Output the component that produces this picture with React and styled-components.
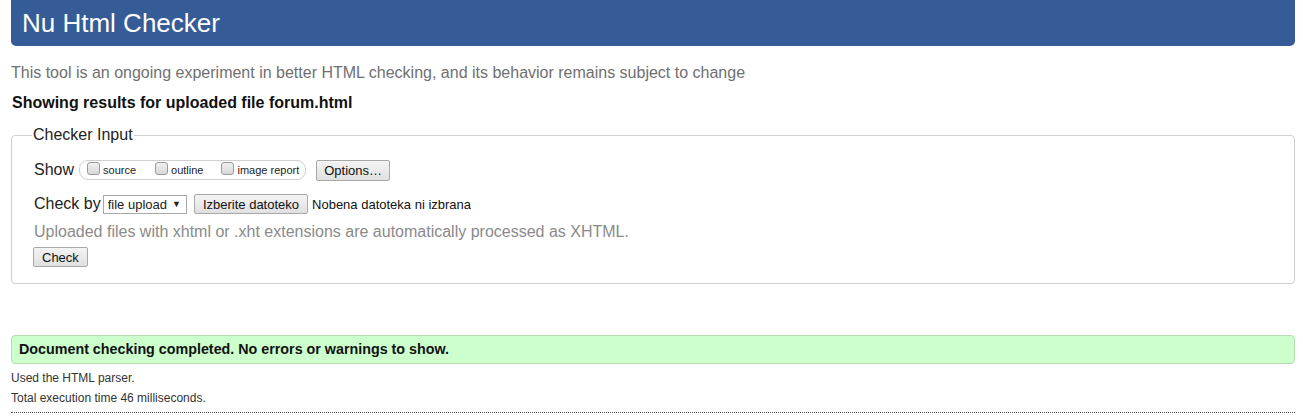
import React from 'react'
import styled, { createGlobalStyle } from 'styled-components'

const GlobalStyle = createGlobalStyle`
  html, body {
    margin: 0;
    padding: 0;
    background: #fff;
  }
  body {
    font-family: "Liberation Sans", Arial, sans-serif;
    color: #222;
  }
`

const Page = styled.div`
  padding: 0 8px 0 11px;
  width: 1284px;
`

const Header = styled.h1`
  margin: 0;
  height: 46px;
  background: #365c97;
  border-radius: 0 0 5px 5px;
  color: #fff;
  font-weight: normal;
  font-size: 26px;
  line-height: 46px;
  padding-left: 11px;
  box-sizing: border-box;
`

const Intro = styled.p`
  margin: 18px 0 0 0;
  font-size: 16px;
  line-height: 18px;
  color: #707070;
`

const ResultsFor = styled.h2`
  margin: 12px 0 0 1px;
  font-size: 16px;
  line-height: 18px;
  font-weight: bold;
  color: #111;
`

const Fieldset = styled.fieldset`
  margin: 14px 0 0 0;
  border: 1px solid #cfcfcf;
  border-radius: 4px;
  padding: 15px 22px 15px 22px;
`

const Legend = styled.legend`
  font-size: 16px;
  padding: 0 1px;
  margin-left: -2px;
  color: #222;
`

const Row = styled.div`
  display: flex;
  align-items: center;
  gap: ${p => p.gap || 4}px;
  margin-top: ${p => p.top || 0}px;
  height: 22px;
`

const RowLabel = styled.span`
  font-size: 16px;
  color: #222;
`

const Group = styled.span`
  display: inline-flex;
  align-items: center;
  height: 18px;
  border: 1px solid #cfcfcf;
  border-radius: 9px;
  padding: 0 6px 0 7px;
  margin-left: 1px;
`

const CheckItem = styled.label`
  display: inline-flex;
  align-items: center;
  font-size: 11px;
  color: #222;
  margin-right: ${p => p.gap || 0}px;
`

const Box = styled.input`
  appearance: none;
  width: 13px;
  height: 13px;
  margin: -3px 3px 0 0;
  border: 1px solid #9a9a9a;
  border-radius: 3px;
  background: linear-gradient(#f0f0f0, #d8d8d8);
`

const Button = styled.button`
  font-family: "Liberation Sans", Arial, sans-serif;
  font-size: 13px;
  color: #111;
  height: ${p => p.h || 21}px;
  padding: 0 ${p => p.px || 7}px;
  border: 1px solid #a8a8a8;
  border-radius: 2px;
  background: linear-gradient(#f4f4f4, #e0e0e0);
  margin-left: ${p => p.ml || 0}px;
`

const Select = styled.span`
  display: inline-flex;
  align-items: center;
  height: 19px;
  box-sizing: border-box;
  border: 1px solid #a8a8a8;
  background: #fff;
  font-size: 13px;
  padding: 0 5px 0 4px;
  gap: 5px;
  margin-left: -2px;
`

const Arrow = styled.span`
  font-size: 9px;
`

const FileName = styled.span`
  font-size: 13px;
  color: #111;
`

const Note = styled.p`
  margin: 8px 0 0 0;
  font-size: 16px;
  line-height: 18px;
  color: #8a8a8a;
`

const Success = styled.div`
  margin-top: 51px;
  height: 29px;
  box-sizing: border-box;
  background: #ccffcc;
  border: 1px solid #b5dcb5;
  border-radius: 4px;
  padding-left: 7px;
  font-size: 14.3px;
  font-weight: bold;
  line-height: 27px;
  color: #111;
`

const Detail = styled.p`
  margin: ${p => p.top || 0}px 0 0 0;
  font-size: 12px;
  line-height: 14px;
  color: #333;
`

const Rule = styled.hr`
  margin: 7px 0 0 0;
  border: 0;
  border-top: 1px dotted #555;
`

export default function App() {
  return (
    <Page>
      <GlobalStyle />
      <Header>Nu Html Checker</Header>
      <Intro>This tool is an ongoing experiment in better HTML checking, and its behavior remains subject to change</Intro>
      <ResultsFor>Showing results for uploaded file forum.html</ResultsFor>
      <Fieldset>
        <Legend>Checker Input</Legend>
        <Row gap={4}>
          <RowLabel>Show</RowLabel>
          <Group>
            <CheckItem gap={19}><Box type="checkbox" />source</CheckItem>
            <CheckItem gap={18}><Box type="checkbox" />outline</CheckItem>
            <CheckItem><Box type="checkbox" />image report</CheckItem>
          </Group>
          <Button ml={6}>Options…</Button>
        </Row>
        <Row gap={4} top={12}>
          <RowLabel>Check by</RowLabel>
          <Select>file upload<Arrow>▼</Arrow></Select>
          <Button ml={3} h={20} px={8}>Izberite datoteko</Button>
          <FileName>Nobena datoteka ni izbrana</FileName>
        </Row>
        <Note>Uploaded files with xhtml or .xht extensions are automatically processed as XHTML.</Note>
        <Row top={5}>
          <Button ml={-1} h={20} px={8}>Check</Button>
        </Row>
      </Fieldset>
      <Success>Document checking completed. No errors or warnings to show.</Success>
      <Detail top={7}>Used the HTML parser.</Detail>
      <Detail top={6}>Total execution time 46 milliseconds.</Detail>
      <Rule />
    </Page>
  )
}
